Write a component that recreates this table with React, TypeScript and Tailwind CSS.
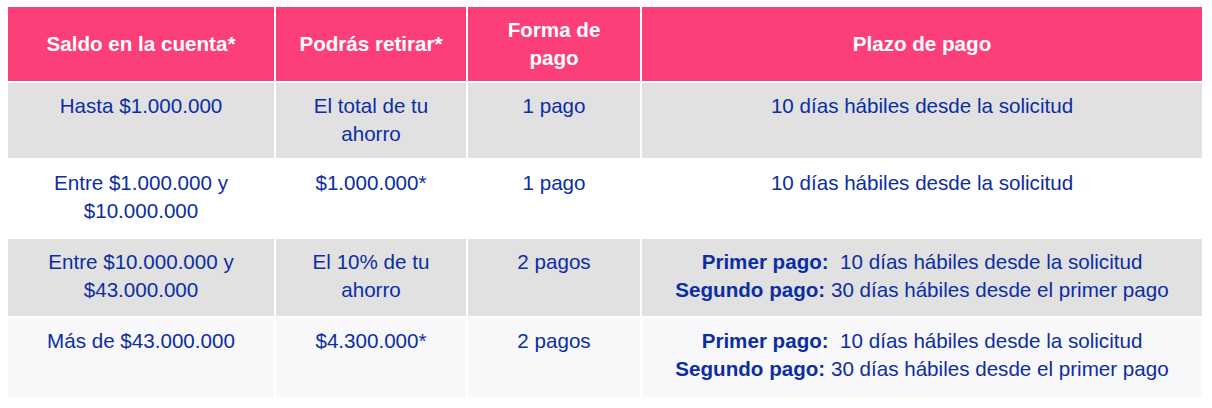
import React from 'react';

const rows = [
  {
    bg: 'bg-[#e1e1e1]',
    saldo: ['Hasta $1.000.000'],
    retiro: ['El total de tu', 'ahorro'],
    forma: '1 pago',
    plazo: null as null | string,
  },
  {
    bg: 'bg-white',
    saldo: ['Entre $1.000.000 y', '$10.000.000'],
    retiro: ['$1.000.000*'],
    forma: '1 pago',
    plazo: null,
  },
  {
    bg: 'bg-[#e1e1e1]',
    saldo: ['Entre $10.000.000 y', '$43.000.000'],
    retiro: ['El 10% de tu', 'ahorro'],
    forma: '2 pagos',
    plazo: 'split',
  },
  {
    bg: 'bg-[#f8f8fa]',
    saldo: ['Más de $43.000.000'],
    retiro: ['$4.300.000*'],
    forma: '2 pagos',
    plazo: 'split',
  },
];

const HeaderCell = ({ children }: { children: React.ReactNode }) => (
  <div className="bg-[#fc3f78] flex items-center justify-center text-center font-bold text-white px-2">
    {children}
  </div>
);

const BodyCell = ({ bg, children }: { bg: string; children: React.ReactNode }) => (
  <div className={`${bg} text-center pt-[9px] px-2`}>{children}</div>
);

export default function App() {
  return (
    <div
      className="w-[1212px] h-[408px] bg-white pt-[7px] pl-[8px] text-[20.6px] leading-[28px] text-[#0c2ea2]"
      style={{ fontFamily: '"Liberation Sans", Arial, sans-serif' }}
    >
      <div className="grid grid-cols-[266px_190px_172px_560px] grid-rows-[74px_75px_77px_77px_79px] gap-[2px]">
        <HeaderCell>Saldo en la cuenta*</HeaderCell>
        <HeaderCell>Podrás retirar*</HeaderCell>
        <HeaderCell>
          Forma de
          <br />
          pago
        </HeaderCell>
        <HeaderCell>Plazo de pago</HeaderCell>

        {rows.map((r, i) => (
          <React.Fragment key={i}>
            <BodyCell bg={r.bg}>
              {r.saldo.map((l) => (
                <div key={l}>{l}</div>
              ))}
            </BodyCell>
            <BodyCell bg={r.bg}>
              {r.retiro.map((l) => (
                <div key={l}>{l}</div>
              ))}
            </BodyCell>
            <BodyCell bg={r.bg}>{r.forma}</BodyCell>
            <BodyCell bg={r.bg}>
              {r.plazo ? (
                <>
                  <div>
                    <span className="font-bold">Primer pago:</span>&nbsp; 10 días hábiles desde la solicitud
                  </div>
                  <div>
                    <span className="font-bold">Segundo pago:</span> 30 días hábiles desde el primer pago
                  </div>
                </>
              ) : (
                <div>10 días hábiles desde la solicitud</div>
              )}
            </BodyCell>
          </React.Fragment>
        ))}
      </div>
    </div>
  );
}
